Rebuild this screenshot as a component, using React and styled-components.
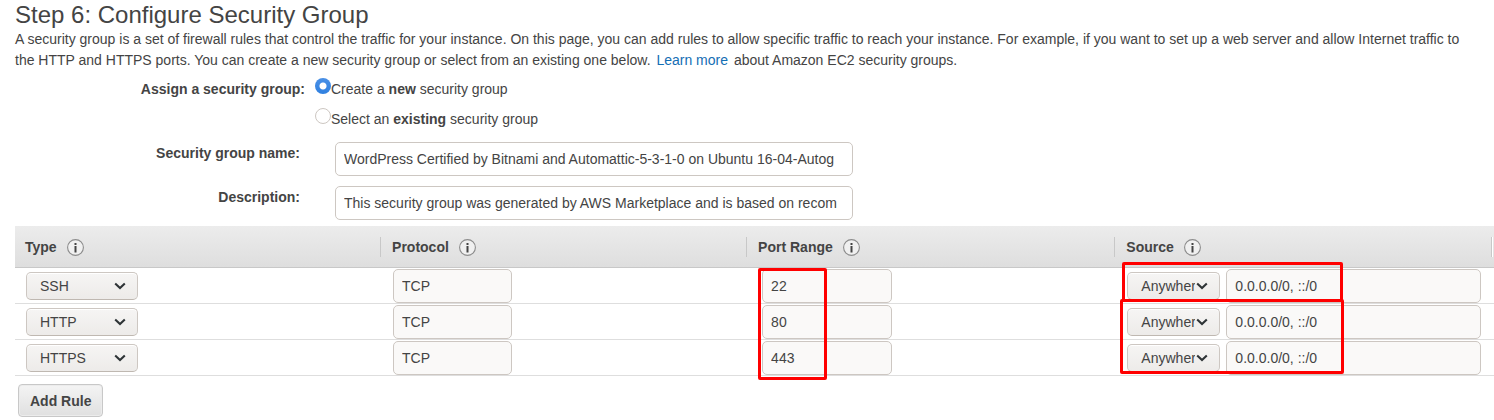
import React from 'react'
import styled, { createGlobalStyle } from 'styled-components'

const columns = [
    { name: 'Type', width: '24.75%' },
    { name: 'Protocol', width: '24.75%' },
    { name: 'Port Range', width: '24.9%' },
    { name: 'Source', width: 'auto' },
]

const rules = [
    { type: 'SSH', protocol: 'TCP', port: '22', source: '0.0.0.0/0, ::/0' },
    { type: 'HTTP', protocol: 'TCP', port: '80', source: '0.0.0.0/0, ::/0' },
    { type: 'HTTPS', protocol: 'TCP', port: '443', source: '0.0.0.0/0, ::/0' },
]

function InfoIcon() {
    return (
        <svg width="17" height="17" viewBox="0 0 17 17" aria-hidden="true">
            <circle cx="8.5" cy="8.5" r="7.9" fill="#f0f0f0" stroke="#8c8c8c" strokeWidth="1.1" />
            <rect x="7.5" y="4" width="2" height="2" fill="#444" />
            <rect x="7.5" y="7" width="2" height="6.500" fill="#444" />
        </svg>
    )
}

function Dropdown({ label, value, options, narrow }) {
    return (
        <SelectWrap $narrow={narrow}>
            <Select aria-label={label} defaultValue={value}>
                {options.map((option) => <option key={option}>{option}</option>)}
            </Select>
            <svg width="12" height="8" viewBox="0 0 12 8" aria-hidden="true">
                <path d="M1.200 1.500L6 6l4.800-4.500" fill="none" stroke="#2e3436" strokeWidth="2.1" />
            </svg>
        </SelectWrap>
    )
}

function App() {
    return (
        <Page>
            <GlobalStyle />
            <Title>Step 6: Configure Security Group</Title>
            <Intro>
                A security group is a set of firewall rules that control the traffic for your instance. On this page, you can add rules to allow specific traffic to reach your instance. For example, if you want to set up a web server and allow Internet traffic to the HTTP and HTTPS ports. You can create a new security group or select from an existing one below. <LearnMore href="#learn">Learn more</LearnMore> about Amazon EC2 security groups.
            </Intro>

            <Assign role="radiogroup" aria-labelledby="assign">
                <AssignLabel id="assign">Assign a security group:</AssignLabel>
                <div>
                    <Choice>
                        <Radio name="group" defaultChecked />
                        <span>Create a <b>new</b> security group</span>
                    </Choice>
                    <Choice>
                        <Radio name="group" />
                        <span>Select an <b>existing</b> security group</span>
                    </Choice>
                </div>
            </Assign>

            <Fields>
                <FieldLabel htmlFor="name">Security group name:</FieldLabel>
                <TextInput id="name" defaultValue="WordPress Certified by Bitnami and Automattic-5-3-1-0 on Ubuntu 16-04-Autog" />
                <FieldLabel htmlFor="description">Description:</FieldLabel>
                <TextInput id="description" defaultValue="This security group was generated by AWS Marketplace and is based on recom" />
            </Fields>

            <Table>
                <thead>
                    <tr>
                        {columns.map((column) => (
                            <HeadCell key={column.name} $width={column.width}>
                                <HeadContent>{column.name}<InfoIcon /></HeadContent>
                            </HeadCell>
                        ))}
                    </tr>
                </thead>
                <tbody>
                    {rules.map((rule, i) => (
                        <tr key={rule.type}>
                            <Cell $indent="11px">
                                <Dropdown label="Type" value={rule.type} options={['SSH', 'HTTP', 'HTTPS']} />
                            </Cell>
                            <Cell $indent="12px">
                                <ProtocolInput aria-label="Protocol" defaultValue={rule.protocol} readOnly />
                            </Cell>
                            <Cell $indent="15px">
                                <PortInput aria-label="Port range" defaultValue={rule.port} readOnly />
                                {i === 0 && <PortMark />}
                            </Cell>
                            <Cell $indent="12px">
                                <Source>
                                    <Dropdown label="Source" value="Anywhere" options={['Anywhere', 'Custom', 'My IP']} narrow />
                                    <SourceInput aria-label="Source address" defaultValue={rule.source} readOnly />
                                </Source>
                                {i === 0 && <FirstSourceMark />}
                                {i === 1 && <OtherSourceMark />}
                            </Cell>
                        </tr>
                    ))}
                </tbody>
            </Table>
            <AddButton type="button">Add Rule</AddButton>
        </Page>
    )
}

export default App


const GlobalStyle = createGlobalStyle`
    * {
        box-sizing: border-box;
    }
    body {
        margin: 0;
        background: #fff;
        color: #444;
        font-family: "Liberation Sans", Arial, sans-serif;
        font-size: 14px;
        line-height: 21px;
    }
    input, select, button {
        margin: 0;
        color: #444;
        font-family: inherit;
        font-size: 14px;
    }
`

const Page = styled.main`
    padding-left: 15px;
`

const Title = styled.h1`
    margin: 0;
    font-size: 24px;
    font-weight: normal;
    line-height: 29px;
`

const Intro = styled.p`
    margin: 0;
    padding-right: 20px;
`

const LearnMore = styled.a`
    margin: 0 2px;
    color: #146eb4;
    text-decoration: none;
`

const Assign = styled.div`
    display: grid;
    grid-template-columns: 290px 1fr;
    column-gap: 10px;
    padding: 3px 0 8px;
    line-height: 30px;
`

const AssignLabel = styled.div`
    font-weight: bold;
    text-align: right;
`

const Choice = styled.label`
    display: flex;
    align-items: flex-start;
`

const Radio = styled.input.attrs({ type: 'radio' })`
    appearance: none;
    width: 16px;
    height: 16px;
    margin-top: 4px;
    border: 1px solid #cdc7c2;
    border-radius: 50%;
    background: #fff;

    &:checked {
        border: none;
        background: radial-gradient(circle, #fff 3px, transparent 4px), linear-gradient(#4a90e6, #2f80e0);
    }
`

const Fields = styled.div`
    display: grid;
    grid-template-columns: 285px 518px;
    column-gap: 35px;
    row-gap: 10px;
    padding-bottom: 6px;
`

const FieldLabel = styled.label`
    padding-top: 1px;
    font-weight: bold;
    text-align: right;
`

const TextInput = styled.input`
    display: block;
    width: 100%;
    height: 34px;
    padding: 0 8px;
    border: 1px solid #cdc7c2;
    border-radius: 5px;
    background: #fff;
`

const RuleInput = styled(TextInput)`
    background: #faf9f8;
`

const ProtocolInput = styled(RuleInput)`
    width: 119px;
`

const PortInput = styled(RuleInput)`
    width: 130px;
`

const SourceInput = styled(RuleInput)`
    width: 255px;
`

const Table = styled.table`
    width: 100%;
    table-layout: fixed;
    border-collapse: separate;
    border-spacing: 0;
`

const HeadCell = styled.th`
    width: ${(props) => props.$width};
    height: 42px;
    padding: 1px 0 0;
    border-bottom: 1px solid #c8c8c8;
    background: linear-gradient(#ececec, #dedede);
    text-align: left;

    &:last-child {
        padding-right: 2px;
    }
`

const HeadContent = styled.div`
    display: flex;
    align-items: center;
    gap: 10px;
    height: 20px;
    padding-left: 11px;
    border-right: 1px solid #c8c8c8;
    box-shadow: 1px 0 #fff;

    ${HeadCell}:first-child & {
        padding-left: 10px;
    }
`

const Cell = styled.td`
    position: relative;
    height: 36px;
    padding: 1px 0 0 ${(props) => props.$indent};
    border-bottom: 1px solid #dedede;
`

const SelectWrap = styled.div`
    position: relative;
    width: ${(props) => (props.$narrow ? '93px' : '112px')};
    height: 28px;

    svg {
        position: absolute;
        top: 10px;
        right: 12px;
        pointer-events: none;
    }
`

const Select = styled.select`
    appearance: none;
    display: block;
    width: 100%;
    height: 28px;
    padding: 0 24px 0 13px;
    border: 1px solid #cdc7c2;
    border-bottom-color: #bfb8b1;
    border-radius: 5px;
    background: linear-gradient(#f6f5f4, #edebe9);
    box-shadow: inset 0 1px #fff;
`

const Source = styled.div`
    display: flex;
    align-items: center;
    gap: 6px;
`

// red outlines drawn over the values to check
const Mark = styled.div`
    position: absolute;
    border: 3px solid #f00;
    border-radius: 2px;
    pointer-events: none;
    z-index: 1;
`

const PortMark = styled(Mark)`
    top: 0;
    left: 11px;
    width: 69px;
    height: 112px;
`

const FirstSourceMark = styled(Mark)`
    top: -6px;
    left: 7px;
    width: 221px;
    height: 40px;
`

const OtherSourceMark = styled(Mark)`
    top: -5px;
    left: 5px;
    width: 224px;
    height: 75px;
`

const AddButton = styled.button`
    height: 33px;
    margin: 8px 3px 3px;
    padding: 0 11px;
    border: 1px solid #c8c8c8;
    border-radius: 4px;
    background: linear-gradient(#f4f4f4, #e0e0e0);
    box-shadow: inset 0 0 0 1px #ececec;
    font-weight: bold;
`
